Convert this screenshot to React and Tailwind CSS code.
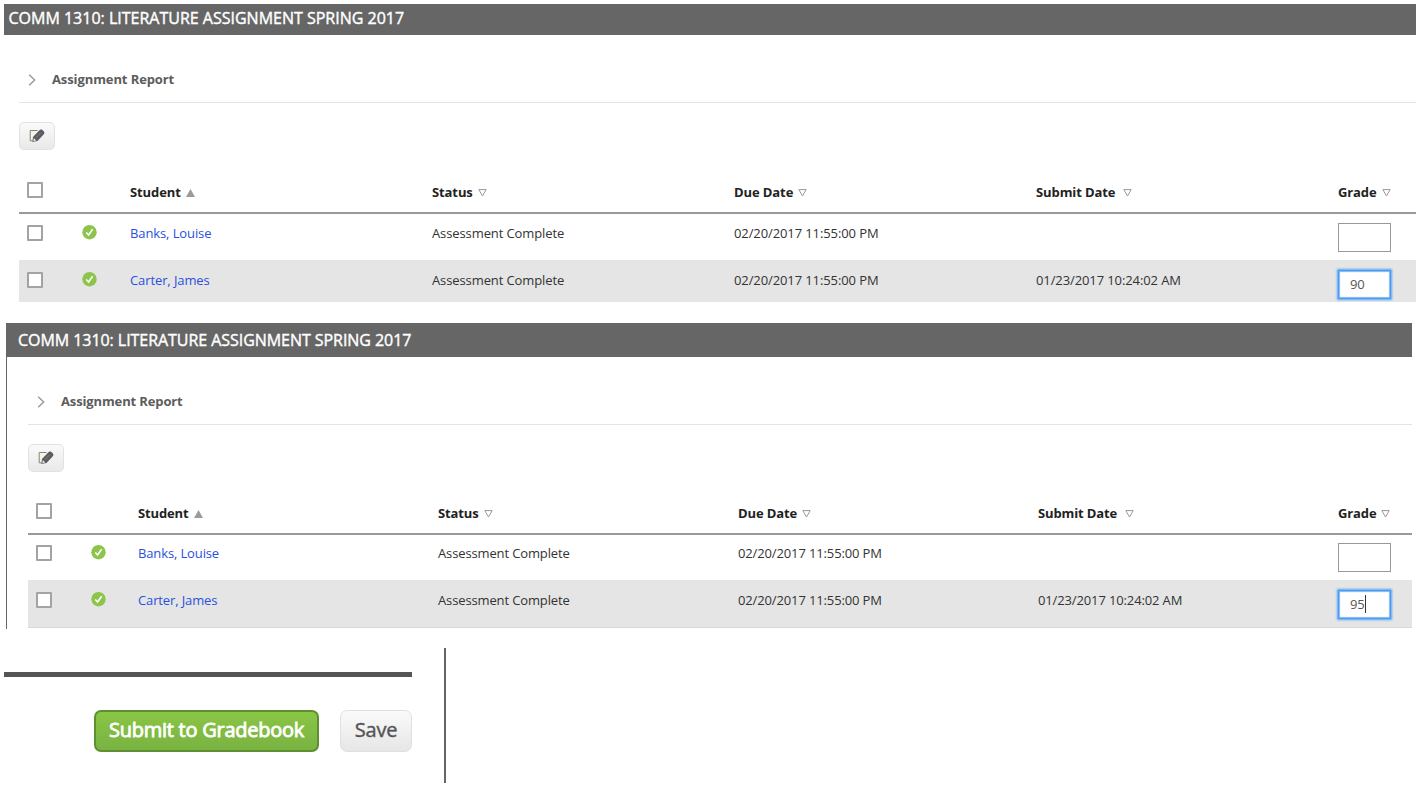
import React, { useState } from 'react';
import clsx from 'clsx';

const TITLE = 'COMM 1310: LITERATURE ASSIGNMENT SPRING 2017';

const COLUMNS = [
  { label: 'Student', sort: 'asc' },
  { label: 'Status' },
  { label: 'Due Date' },
  { label: 'Submit Date', spaced: true },
  { label: 'Grade' },
];

const STUDENTS = [
  { name: 'Banks, Louise', status: 'Assessment Complete', due: '02/20/2017 11:55:00 PM', submitted: '' },
  { name: 'Carter, James', status: 'Assessment Complete', due: '02/20/2017 11:55:00 PM', submitted: '01/23/2017 10:24:02 AM' },
];

const EditIcon = () => (
  <svg className="w-4 h-3.5" viewBox="0 0 16 14" fill="none">
    <path d="M1.3 1.5h6.5v1.5L4 7.5l-1 4.3H1.3z" fill="#f5f5e0" />
    <path d="M8.5 1.5H1.2v10.3h2.3" stroke="#777" strokeWidth="0.9" />
    <path d="M3.3 13l.7-5L10.4 1.3c.8-.9 2-1.1 3-.3l1.3 1.2c.9.9.9 2.1.1 3L8.5 12z" fill="#5b5c60" />
    <path d="M4.7 9l2.6 2.4-2.9.9z" fill="#e8e8e8" />
    <path d="M7 8.7l4.8-5" stroke="#8a8b90" strokeWidth="0.8" />
  </svg>
);

const CheckCircle = () => (
  <svg className="w-[15px] h-[15px]" viewBox="0 0 15 15" fill="none">
    <circle cx="7.5" cy="7.2" r="7.2" fill="#8dc44c" />
    <path d="M4.3 7.5l2.3 2.5 4-5.8" stroke="#fff" strokeWidth="1.6" />
  </svg>
);

const SortIcon = ({ asc }) =>
  asc ? (
    <svg className="w-[9px] h-2" viewBox="0 0 9 8">
      <path d="M4.5 0L9 8H0z" fill="#9b9b9b" />
    </svg>
  ) : (
    <svg className="w-[9px] h-2" viewBox="0 0 9 8" fill="none">
      <path d="M.8.6h7.4L4.5 7z" stroke="#999" strokeWidth="1" />
    </svg>
  );

const Checkbox = () => (
  <input
    type="checkbox"
    className="block appearance-none w-4 h-4 ml-2 bg-white border-2 border-[#a3a3a3] rounded-[1px]"
  />
);

const GradeInput = ({ value, active, caret }) => {
  return (
    <div
      className={clsx(
        'flex items-center w-[53px] h-[29px] -mt-0.5 bg-white border text-[#555]',
        active
          ? 'pl-[11px] pb-0.5 border-[#4a9af0] shadow-[0_0_2px_1px_#5aa5f5,inset_0_0_1px_1px_#7db8f7]'
          : 'border-[#999]'
      )}
    >
      <span>{value}</span>
      {caret && <span className="w-px h-[18px] bg-[#333]" />}
    </div>
  );
};

const Panel = ({ styles, grade, caret }) => {
  const [open, setOpen] = useState(false);

  return (
    <section className={styles.panel}>
      <h2 className={clsx('flex items-center bg-[#666] text-white [-webkit-text-stroke:0.4px_white]', styles.header)}>
        {TITLE}
      </h2>

      <div className={styles.body}>
        {/* Collapsible report heading */}
        <div
          onClick={() => setOpen(!open)}
          className={clsx('flex items-center border-b border-[#e4e4e4] pl-[9px] font-bold text-[#5c5c5c]', styles.report)}
        >
          <svg className="w-2 h-3 mr-4" viewBox="0 0 8 12" fill="none">
            <path d="M1.2.7L6.7 6l-5.5 5.3" stroke="#999" strokeWidth="1.4" />
          </svg>
          <span>Assignment Report</span>
        </div>

        <button className="flex items-center justify-center w-9 h-7 mt-[19px] rounded-[5px] border border-[#e2e2e2] bg-gradient-to-b from-[#fafafa] to-[#e9e9e9]">
          <EditIcon />
        </button>

        {/* Student table */}
        <div className={clsx('grid border-b-2 border-[#999] font-bold text-[#222]', styles.grid, styles.thead)}>
          <Checkbox />
          <span />
          {COLUMNS.map((col) => (
            <div key={col.label} className={clsx('flex items-center h-[22px]', col.spaced ? 'gap-2' : 'gap-[5px]')}>
              <span>{col.label}</span>
              <span>
                <SortIcon asc={col.sort === 'asc'} />
              </span>
            </div>
          ))}
        </div>

        {STUDENTS.map((s, i) => (
          <div
            key={s.name}
            className={clsx('grid items-start leading-4 text-[#333]', styles.grid, styles.rows[i], i === 1 && 'bg-[#e5e5e5]')}
          >
            <Checkbox />
            <CheckCircle />
            <a href="#" className="text-[#2a50e0]">{s.name}</a>
            <span>{s.status}</span>
            <span>{s.due}</span>
            <span>{s.submitted}</span>
            <GradeInput value={i === 1 ? grade : ''} active={i === 1} caret={i === 1 && caret} />
          </div>
        ))}
      </div>
    </section>
  );
};

const FIRST = {
  panel: 'w-[1412px] h-[298px] ml-1 overflow-hidden text-[13px] tracking-[-0.1px]',
  header: 'h-[31px] pl-[4.5px] pb-[3px] text-[16px] tracking-[0px]',
  body: 'pl-[15px]',
  report: 'h-[68px] pt-[22px]',
  grid: 'grid-cols-[63px_48px_302px_302px_302px_302px_78px]',
  thead: 'h-[32px] mt-[32px]',
  rows: ['h-[46px] pt-[11px]', 'h-[42px] pt-3'],
};

const SECOND = {
  panel: 'w-[1406px] h-[306px] mt-[21px] ml-1.5 border-l border-[#666] text-[13px] tracking-[-0.13px]',
  header: 'h-[34px] pl-[11px] text-[16px] tracking-[-0.05px]',
  body: 'pl-[21px]',
  report: 'h-[68px] pt-[22px]',
  grid: 'grid-cols-[63px_47px_300px_300px_300px_300px_74px]',
  thead: 'h-[32px] mt-[31px]',
  rows: ['h-[45px] pt-2.5', 'h-[48px] pt-3 border-b border-[#d8d8d8]'],
};

export default function App() {
  return (
    <main className="w-[1422px] h-[791px] pt-1 overflow-hidden bg-white font-['Open_Sans',sans-serif]">
      <Panel styles={FIRST} grade="90" />
      <Panel styles={SECOND} grade="95" caret />

      {/* Footer actions */}
      <footer className="flex w-[446px] h-[135px] mt-[19px] pl-1 border-r-2 border-[#666]">
        <div className="w-[408px] mt-6">
          <div className="h-[5px] bg-[#555]" />
          <div className="flex justify-end gap-[21px] mt-[33px] text-xl">
            <button className="w-[225px] h-[42px] pb-0.5 rounded-[7px] border-2 border-[#5f8f33] bg-gradient-to-b from-[#8ac645] to-[#79b342] text-white tracking-[-0.25px] [-webkit-text-stroke:0.8px_white]">
              Submit to Gradebook
            </button>
            <button className="w-[72px] h-[42px] pb-0.5 rounded-[7px] border border-[#e0e0e0] bg-gradient-to-b from-[#fafafa] to-[#e6e6e6] text-[#555] tracking-[-0.2px] [-webkit-text-stroke:0.4px_#555]">
              Save
            </button>
          </div>
        </div>
      </footer>
    </main>
  );
}
